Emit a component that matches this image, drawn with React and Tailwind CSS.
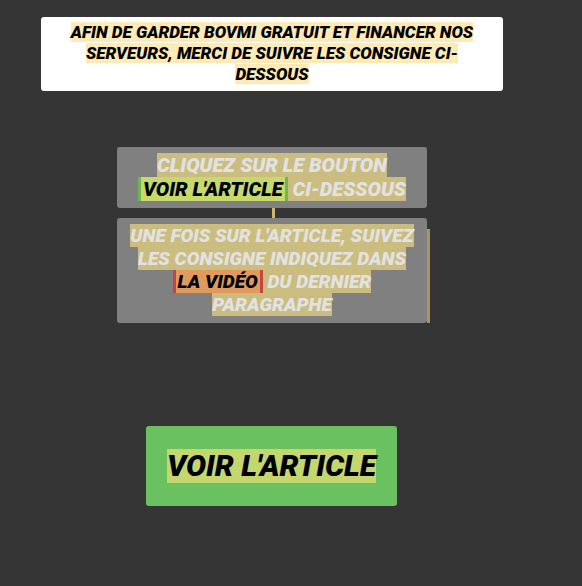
import React from 'react';

const font = { fontFamily: 'Roboto, "Liberation Sans", sans-serif' };

export default function App() {
  return (
    <div className="min-h-[586px] w-[582px] bg-[#353535] pt-[17px] italic font-black uppercase" style={font}>
      {/* notice */}
      <div className="ml-[41px] w-[462px] h-[74px] bg-white rounded-[3px] pt-[5px] px-[20px] text-center text-[17px] leading-[21px] text-black">
        <span className="bg-[#fdeab5] box-decoration-clone">
          Afin de garder BOVMI gratuit et financer nos serveurs, merci de suivre les consigne ci-dessous
        </span>
      </div>

      {/* steps */}
      <div className="mt-[56px] ml-[117px] w-[314px] flex flex-col">
        <div className="w-[310px] h-[61px] bg-[#808080] rounded-[3px] pt-[6px] text-center text-[20px] leading-[24px] text-[#e2e2e2]">
          <span className="bg-[#cbbd7f] box-decoration-clone">Cliquez sur le bouton </span>
          <br />
          <span className="bg-[#c6d96b] text-black border-x-[3px] border-[#6cb84c] px-[2px]">Voir l'article</span>
          <span className="bg-[#cbbd7f]"> ci-dessous</span>
        </div>
        <div className="w-[3px] h-[10px] bg-[#c8b870] ml-[155px]" />
        <div className="flex">
          <div className="w-[310px] h-[105px] bg-[#808080] rounded-[3px] pt-[6px] px-[10px] text-center text-[19px] leading-[23px] text-[#e2e2e2]">
            <span className="bg-[#cbbd7f] box-decoration-clone">Une fois sur l'article, suivez les consigne indiquez dans </span>
            <span className="bg-[#e09a5e] text-black border-x-[3px] border-[#c84444] px-[2px] whitespace-nowrap">La vidéo</span>
            <span className="bg-[#cbbd7f] box-decoration-clone"> du dernier paragraphe</span>
          </div>
          <div className="w-[3px] h-[94px] mt-[11px] bg-[#a89860]" />
        </div>
      </div>

      {/* button */}
      <button className="mt-[103px] ml-[146px] w-[251px] h-[80px] bg-[#6ac15f] rounded-[3px] flex items-center justify-center italic font-black uppercase text-[30px] text-black">
        <span className="bg-[#c4d76f] leading-[34px]">Voir l'article</span>
      </button>
    </div>
  );
}
